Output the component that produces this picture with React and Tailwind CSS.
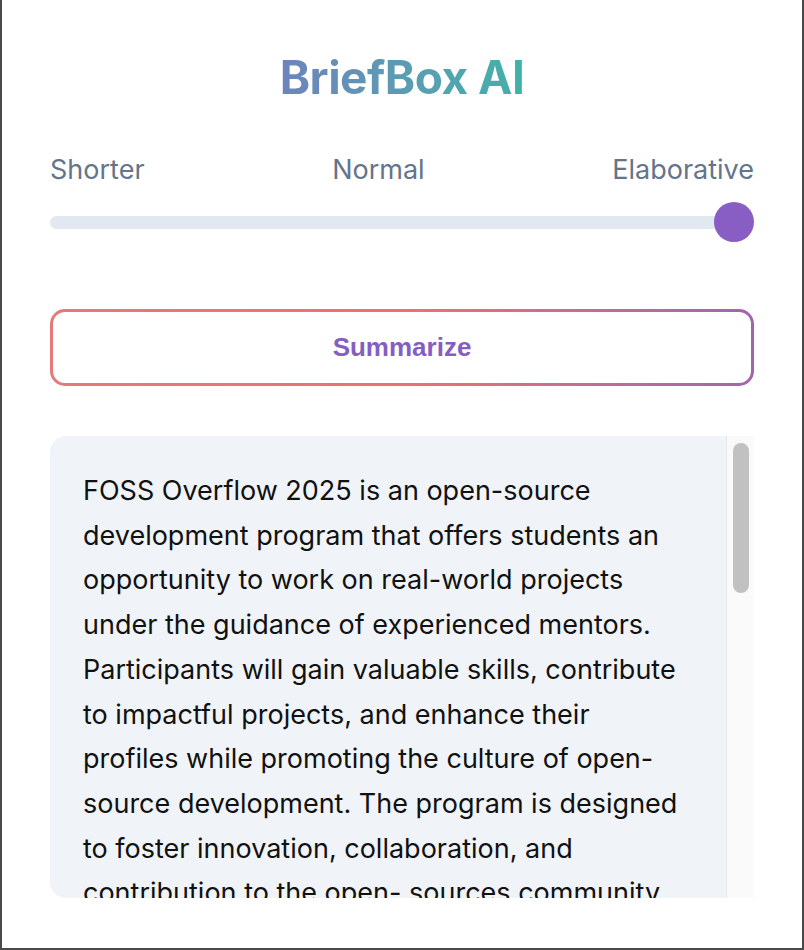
import React from "react";

const lines = [
  "FOSS Overflow 2025 is an open-source",
  "development program that offers students an",
  "opportunity to work on real-world projects",
  "under the guidance of experienced mentors.",
  "Participants will gain valuable skills, contribute",
  "to impactful projects, and enhance their",
  "profiles while promoting the culture of open-",
  "source development. The program is designed",
  "to foster innovation, collaboration, and",
  "contribution to the open- sources community.",
];

export default function App() {
  return (
    <div
      className="w-[804px] h-[950px] bg-white border-x-2 border-b-2 border-[#4a4a4a] px-[48px] flex flex-col"
      style={{ fontFamily: "Inter, 'Noto Sans', sans-serif" }}
    >
      <div className="pt-[50px] h-[104px] flex justify-center">
        <span className="inline-block text-[46px] leading-[54px] font-bold tracking-[-0.5px] bg-gradient-to-r from-[#6c84bc] to-[#3fb2a8] bg-clip-text text-transparent">
          BriefBox AI
        </span>
      </div>

      <div className="mt-[50px] h-[32px] flex justify-between items-center text-[27px] leading-[32px] text-[#64748b]">
        <span>Shorter</span>
        <span>Normal</span>
        <span>Elaborative</span>
      </div>

      <div className="mt-[16px] h-[40px] flex items-center">
        <div className="flex-1 h-[13px] rounded-full bg-[#e2e8f0]"></div>
        <div className="w-[40px] h-[40px] -ml-[20px] rounded-full bg-[#885dc4] shrink-0"></div>
      </div>

      <div className="mt-[67px] h-[77px] rounded-[15px] p-[3px] bg-gradient-to-r from-[#e47a78] via-[#ee7070] to-[#a066aa]">
        <div className="w-full h-full rounded-[12px] bg-white flex items-center justify-center">
          <span
            className="text-[26px] font-bold text-[#845ec2]"
            style={{ fontFamily: "'Liberation Sans', Arial, sans-serif" }}
          >
            Summarize
          </span>
        </div>
      </div>

      <div className="mt-[50px] h-[462px] flex rounded-l-[16px] overflow-hidden">
        <div className="flex-1 bg-[#f0f4f8] overflow-hidden pt-[33px] pl-[33px]">
          <p className="text-[27px] leading-[44.7px] text-[#111111] whitespace-nowrap">
            {lines.map((l, i) => (
              <span key={i} className="block">
                {l}
              </span>
            ))}
          </p>
        </div>
        <div className="w-[28px] bg-[#fafafa] border-l border-[#e8e8e8] flex justify-center pt-[7px]">
          <div className="w-[16px] h-[150px] rounded-full bg-[#c1c1c1]"></div>
        </div>
      </div>
    </div>
  );
}
